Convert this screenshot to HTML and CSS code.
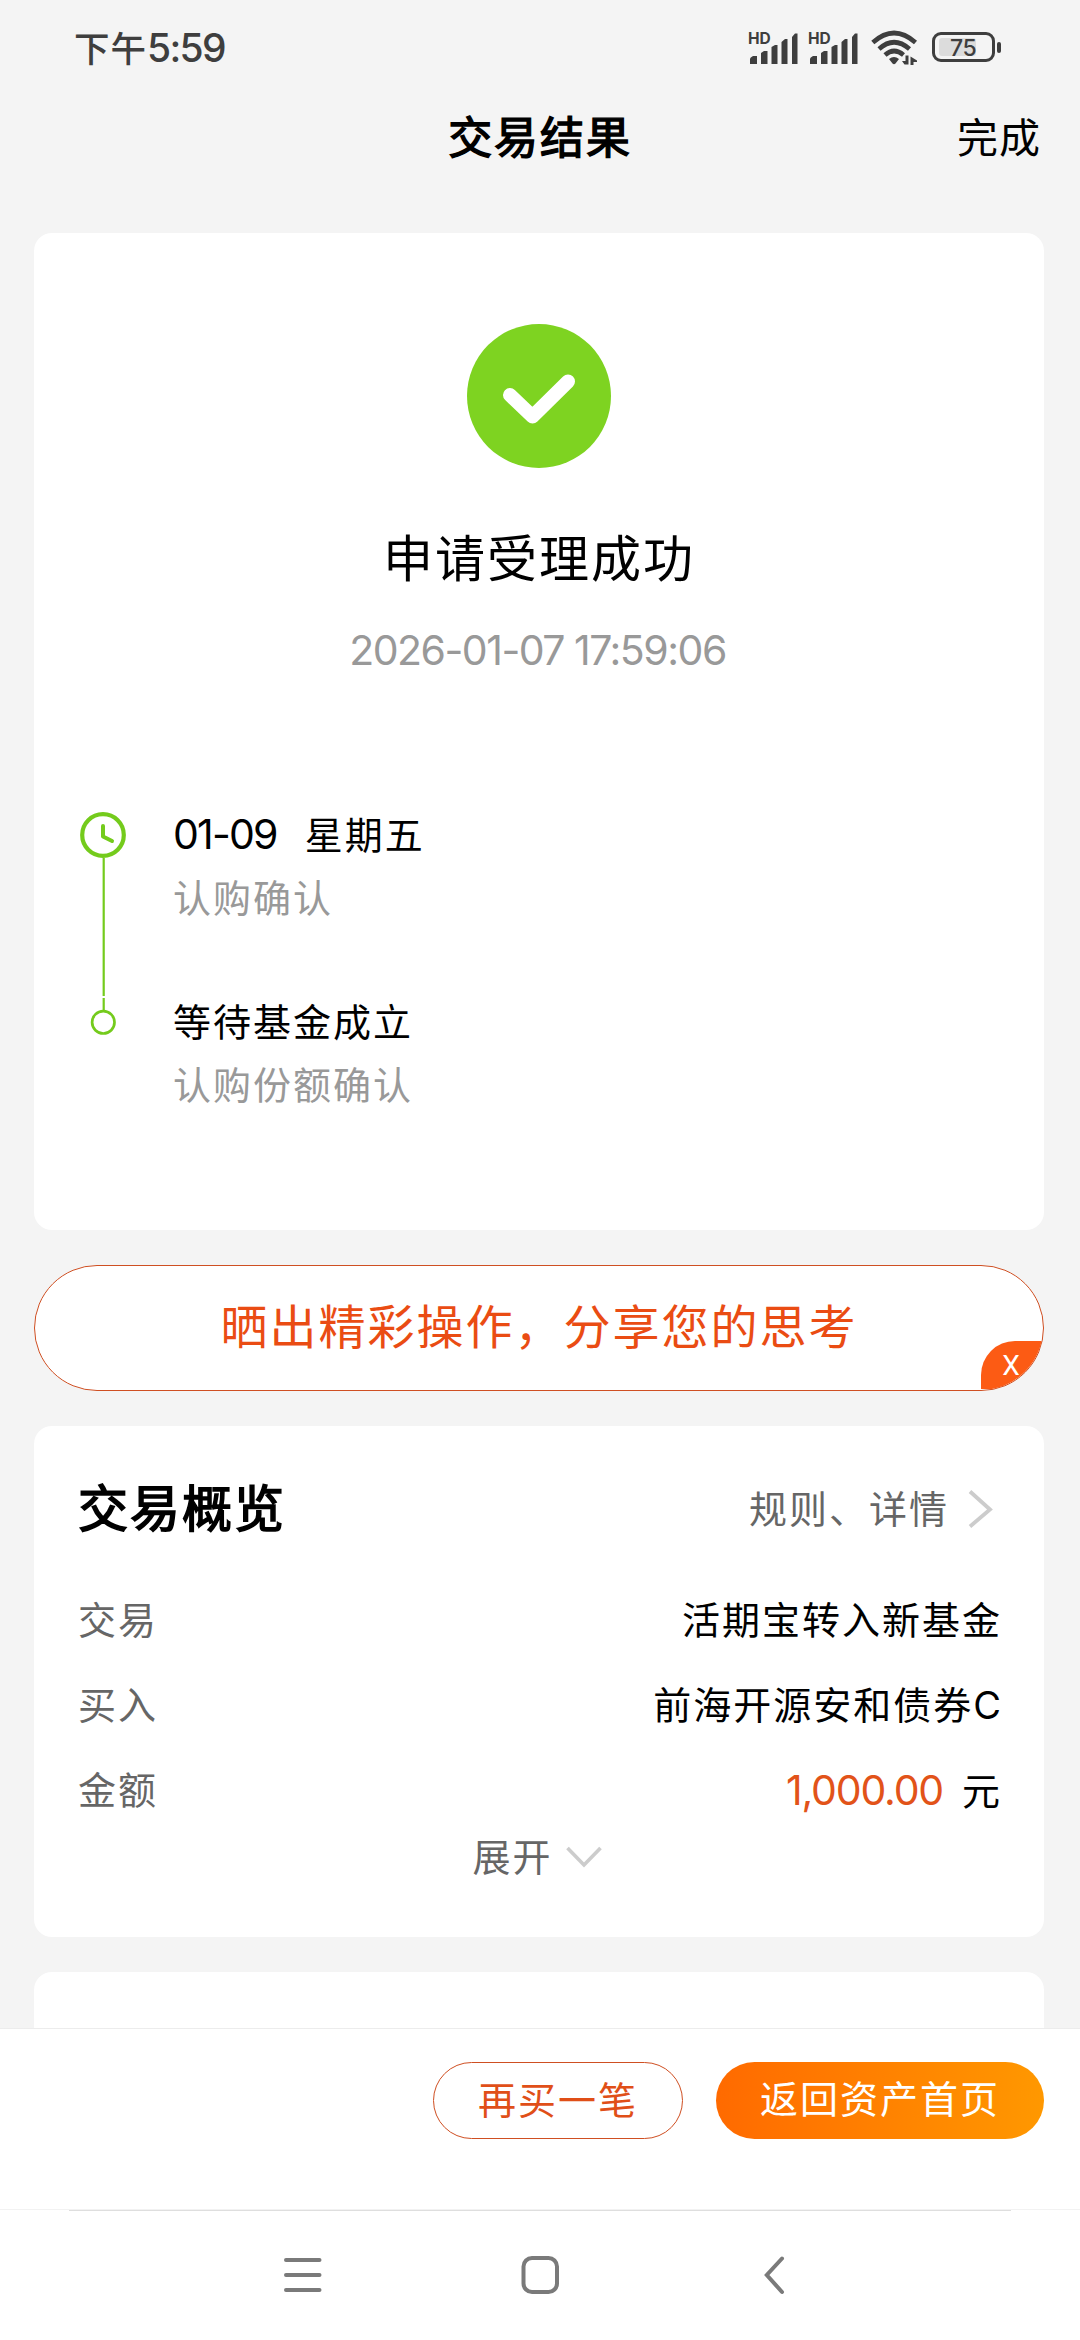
FILE: index.html
```html
<!DOCTYPE html>
<html lang="zh-CN">
<head>
<meta charset="utf-8">
<title>交易结果</title>
<link rel="stylesheet" href="styles.css">
</head>
<body>
<div class="screen">
  <div class="status">
    <div class="status-time">下午<span class="clock">5:59</span></div>
    <div class="status-icons">
      <svg class="signal" width="51" height="36" viewBox="0 0 51 36">
        <text class="hd" x="0" y="14">HD</text>
        <path d="M2 34V29Q2 27.500 5 26H9V34ZM13 34V23L16 21H19.500V34ZM23.500 34V17L27 15H29.500V34ZM33.500 34V12L37 9H39.500V34ZM44 34V7L47 3.500H49.500V34Z"/>
      </svg>
      <svg class="signal" width="51" height="36" viewBox="0 0 51 36">
        <text class="hd" x="0" y="14">HD</text>
        <path d="M2 34V29Q2 27.500 5 26H9V34ZM13 34V23L16 21H19.500V34ZM23.500 34V17L27 15H29.500V34ZM33.500 34V12L37 9H39.500V34ZM44 34V7L47 3.500H49.500V34Z"/>
      </svg>
      <svg class="wifi" width="47" height="36" viewBox="0 0 47 36">
        <path class="arc" d="M1.800 12.500Q23 -6.500 44.500 12.500M8 19Q23 5.500 38.500 19M14 25Q23 17 32.500 25"/>
        <path d="M18 29Q23 25 28 29L24.500 33.500Q23 35 21.500 33.500ZM33.500 34.500L31 31H34.500V25.500H37.500V34.500ZM39.500 35V26.500L46 30.500V32H42.500V35Z"/>
      </svg>
      <svg class="battery" width="70" height="36" viewBox="0 0 70 36">
        <rect class="level" x="7" y="8" width="37" height="18" rx="3"/>
        <rect class="shell" x="1.500" y="3.500" width="60" height="27" rx="7.500"/>
        <rect x="65" y="12" width="4" height="11" rx="2"/>
        <text class="pct" x="18" y="26">75</text>
      </svg>
    </div>
  </div>
  <header class="header">
    <span></span>
    <h1>交易结果</h1>
    <a class="done">完成</a>
  </header>
  <main class="content">
    <section class="card result">
      <svg class="check" width="144" height="144" viewBox="0 0 144 144">
        <circle cx="72" cy="72" r="72" fill="#7ed321"/>
        <path d="M43 71L65.500 92.500L101 57.500" fill="none" stroke="#fff" stroke-width="14" stroke-linecap="round" stroke-linejoin="round"/>
      </svg>
      <h2>申请受理成功</h2>
      <p class="stamp">2026-01-07 17:59:06</p>
      <div class="timeline">
        <svg width="46" height="226" viewBox="0 0 46 226" fill="none" stroke="#74cb1c">
          <path d="M23.700 46V184M23.700 186V199" stroke-width="2.200"/>
          <circle cx="23" cy="23" r="20.800" stroke-width="4.200"/>
          <path d="M23 14V24.500L32 29" stroke-width="4" stroke-linecap="round" stroke-linejoin="round"/>
          <circle cx="23.300" cy="210.300" r="11.200" stroke-width="2.700"/>
        </svg>
        <div class="steps">
          <div class="step">
            <p class="step-title"><span class="num">01-09</span>星期五</p>
            <p class="step-note">认购确认</p>
          </div>
          <div class="step">
            <p class="step-title">等待基金成立</p>
            <p class="step-note">认购份额确认</p>
          </div>
        </div>
      </div>
    </section>
    <section class="share">
      <span>晒出精彩操作，分享您的思考</span>
      <b class="share-close">X</b>
    </section>
    <section class="card overview">
      <div class="overview-head">
        <h3>交易概览</h3>
        <a class="rules">规则、详情
          <svg width="26" height="40" viewBox="0 0 26 40"><path d="M2 2.500L22 20.500L2 37.500" fill="none" stroke="#ccc" stroke-width="3.800"/></svg>
        </a>
      </div>
      <div class="row"><span class="label">交易</span><span class="value">活期宝转入新基金</span></div>
      <div class="row"><span class="label">买入</span><span class="value">前海开源安和债券<span class="latin">C</span></span></div>
      <div class="row"><span class="label">金额</span><span class="value"><span class="amount">1,000.00</span>元</span></div>
      <div class="expand">展开
        <svg width="36" height="24" viewBox="0 0 36 24"><path d="M1.500 3L18 20L34.500 3" fill="none" stroke="#ccc" stroke-width="3.600"/></svg>
      </div>
    </section>
    <section class="card next"></section>
  </main>
  <footer class="actions">
    <a class="btn outline">再买一笔</a>
    <a class="btn solid">返回资产首页</a>
  </footer>
  <nav class="nav">
    <svg width="38" height="40" viewBox="0 0 38 40"><path d="M2 5H35.500M2 20H35.500M2 35H35.500" stroke-linecap="round"/></svg>
    <svg width="38" height="40" viewBox="0 0 38 40"><rect x="2.500" y="3" width="33.500" height="34" rx="8.500"/></svg>
    <svg width="20" height="40" viewBox="0 0 20 40"><path d="M18 3.500L2.800 20L18 37" stroke-linecap="round"/></svg>
  </nav>
</div>
</body>
</html>
```
FILE: styles.css
```css
* { box-sizing: border-box; margin: 0; padding: 0; }
body {
  background: #f4f4f4;
  color: #000;
  font-family: Inter, "Noto Sans CJK SC", sans-serif;
  font-size: 38px;
  letter-spacing: 2px;
}
svg { display: block; flex: none; overflow: visible; }
.screen { display: flex; flex-direction: column; width: 1080px; height: 2340px; overflow: hidden; }

.status { display: flex; justify-content: space-between; height: 96px; padding: 0 78px 0 74px; color: #3e3e3e; }
.status-time { font-size: 35.5px; letter-spacing: 1px; line-height: 96px; font-weight: 500; }
.clock { font-size: 39px; letter-spacing: -1.700px; }
.status-icons { display: flex; padding-top: 30px; fill: #3e3e3e; letter-spacing: 0; }
.signal { margin-right: 9px; }
.wifi { margin-left: 3px; margin-right: 14px; }
.hd { font: 700 15.5px Inter, sans-serif; }
.arc { fill: none; stroke: #3e3e3e; stroke-width: 4.600; }
.level { fill: #dcdcdc; }
.shell { fill: none; stroke: #3e3e3e; stroke-width: 3; }
.pct { font: 500 23px Inter, sans-serif; letter-spacing: -0.500px; }

.header { display: grid; grid-template-columns: 1fr auto 1fr; height: 84px; padding: 0 39px; line-height: 84px; }
.header h1 { font-size: 44px; letter-spacing: 1.900px; font-weight: 400; -webkit-text-stroke: 1.400px #000; }
.done { justify-self: end; font-size: 41px; letter-spacing: 1px; }

.content { flex: 1; display: flex; flex-direction: column; gap: 35px; min-height: 0; padding: 53px 36px 0 34px; overflow: hidden; }
.card { flex: none; border-radius: 18px; background: #fff; }

.result { display: flex; flex-direction: column; align-items: center; height: 997px; padding: 91px 46px 0; }
.result h2 { margin-top: 61px; font-size: 50px; font-weight: 400; line-height: 60px; }
.stamp { margin-top: 41px; margin-right: 3px; color: #999; font-size: 41px; line-height: 40px; letter-spacing: -1.500px; }
.timeline { display: flex; align-self: stretch; gap: 47px; margin-top: 142px; }
.steps { padding-top: 3px; }
.step { height: 187px; }
.step p { line-height: 40px; }
.step .step-note { margin-top: 23px; color: #999; }
.num { margin-right: 28px; font-size: 41px; letter-spacing: -1.800px; line-height: 0; }

.share {
  position: relative; flex: none; height: 126px; overflow: hidden;
  border: 1px solid #cf4f22; border-radius: 63px; background: #fff;
  color: #ea4c13; font-size: 47px; line-height: 121px; text-align: center;
}
.share-close {
  position: absolute; right: 0; bottom: 1px; width: 62px; height: 48px; padding-right: 2px;
  border-top-left-radius: 34px; background: #fc5b14;
  color: #fff; font: 400 28px/50px Roboto, sans-serif; letter-spacing: 0;
}

.overview { height: 511px; padding: 47px 44px 0 44px; }
.overview-head { display: flex; justify-content: space-between; height: 72px; margin-bottom: 33px; line-height: 72px; }
.overview-head h3 { font-size: 50px; font-weight: 400; -webkit-text-stroke: 1.600px #000; }
.rules { display: flex; align-items: center; gap: 19px; margin-right: 6px; color: #666; }
.row { display: flex; justify-content: space-between; height: 85px; line-height: 85px; }
.label { color: #666; }
.value { margin-right: -2px; }
.latin { margin-right: 1px; letter-spacing: 0; }
.amount { margin-right: 19px; color: #e25319; font-size: 41px; letter-spacing: -1.200px; }
.expand { display: flex; justify-content: center; align-items: center; gap: 13px; height: 60px; margin: -6px 4px 0 0; line-height: 60px; color: #666; }
.next { height: 200px; }

.actions { display: flex; justify-content: flex-end; gap: 33px; height: 181px; padding: 33px 36px 0; border-top: 1px solid #ececec; background: #fff; }
.btn { height: 77px; border-radius: 39px; line-height: 75px; text-align: center; }
.outline { width: 250px; border: 1px solid #cf4f22; color: #e04f18; }
.solid { width: 328px; background: linear-gradient(90deg, #ff6a00, #ff9800); color: #fff; }

.nav {
  display: flex; height: 131px; padding: 45px 0 0 284px; gap: 199px;
  border-top: 1px solid #f2f2f2; background: linear-gradient(#dedede, #dedede) 69px 0 / 942px 1px no-repeat #fff;
}
.nav svg { fill: none; stroke: #7a7a7a; stroke-width: 4; }
.nav svg + svg + svg { margin-left: 6px; }
```
